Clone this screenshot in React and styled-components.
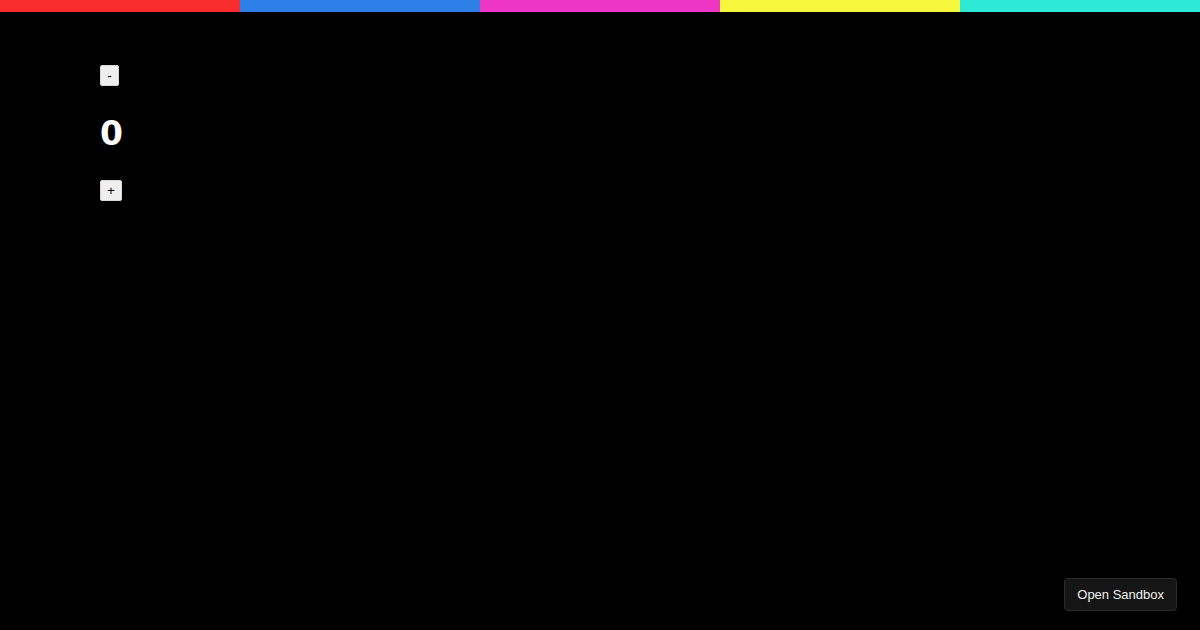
import styled, { createGlobalStyle } from 'styled-components';
import { useState } from 'react';

const GlobalStyle = createGlobalStyle`
  html, body {
    margin: 0;
    background: #000;
    height: 100%;
  }
  body {
    font-family: "Liberation Sans", Arial, sans-serif;
    color: #fff;
  }
`;

const stripes = ['#f82c2c', '#2f7fe8', '#ee36c4', '#f6f73c', '#2ee9d6'];

const App = () => {
    const [count, setCount] = useState(0);
    return (
        <Page>
            <GlobalStyle />
            <Stripe>
                {stripes.map((c) => (
                    <Band key={c} color={c} />
                ))}
            </Stripe>
            <Counter>
                <CountButton onClick={() => setCount(count - 1)}>-</CountButton>
                <Count>{count}</Count>
                <CountButton onClick={() => setCount(count + 1)}>+</CountButton>
            </Counter>
            <SandboxButton>Open Sandbox</SandboxButton>
        </Page>
    );
};

export default App;

const Page = styled.div`
  min-height: 100vh;
  background: #000;
`;

const Stripe = styled.div`
  display: flex;
  height: 12px;
`;

const Band = styled.div`
  flex: 1;
  background: ${(p) => p.color};
`;

const Counter = styled.div`
  display: flex;
  flex-direction: column;
  align-items: flex-start;
  padding: 53px 0 0 100px;
`;

const CountButton = styled.button`
  height: 21px;
  min-width: 19px;
  padding: 0 6px;
  background: #efefef;
  border: 1px solid #d8d8d8;
  border-radius: 2px;
  font-family: "Liberation Sans", Arial, sans-serif;
  font-size: 13.5px;
  color: #000;
  line-height: 1;
  cursor: pointer;
`;

const Count = styled.h1`
  margin: 31px 0 30px 0;
  font-family: "DejaVu Sans", "Noto Sans", sans-serif;
  font-weight: 700;
  font-size: 33px;
  line-height: 33px;
  color: #fff;
`;

const SandboxButton = styled.button`
  position: fixed;
  right: 23px;
  bottom: 19px;
  height: 33px;
  padding: 0 12px;
  background: #151515;
  border: 1px solid #2c2c2c;
  border-radius: 4px;
  color: #f0f0f0;
  font-family: "Liberation Sans", Arial, sans-serif;
  font-size: 13px;
  cursor: pointer;
`;
